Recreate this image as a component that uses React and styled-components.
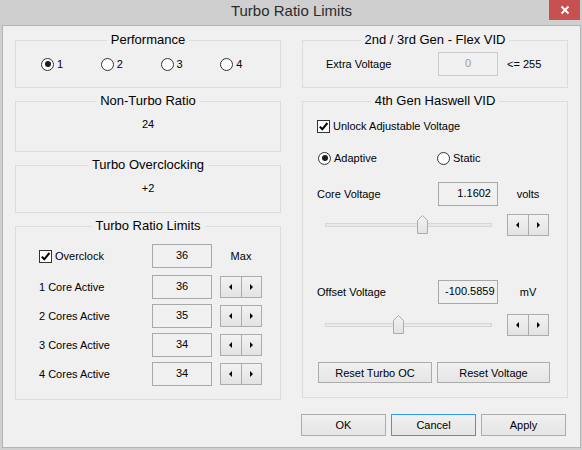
import React from "react";
import styled, { createGlobalStyle } from "styled-components";

const GlobalStyle = createGlobalStyle`
  html, body {
    margin: 0;
    padding: 0;
    background: #cfcfcf;
  }
  body {
    font-family: "Segoe UI", "Liberation Sans", Arial, sans-serif;
  }
  * {
    box-sizing: border-box;
  }
`;

const Window = styled.div`
  width: 582px;
  height: 450px;
  background: #cfcfcf;
  padding: 0 1px 2px 2px;
  display: flex;
  flex-direction: column;
  color: #000;
  font-size: 11px;
`;

const TitleBar = styled.div`
  height: 25px;
  display: grid;
  grid-template-columns: 1fr auto 1fr;
  align-items: start;
`;

const Title = styled.div`
  grid-column: 2;
  font-size: 15px;
  line-height: 22px;
  color: #2b2b2b;
`;

const CloseButton = styled.div`
  grid-column: 3;
  justify-self: end;
  width: 31px;
  height: 20px;
  margin-right: 1px;
  background: #c75050;
  display: flex;
  align-items: center;
  justify-content: center;
`;

const Client = styled.div`
  flex: 1;
  background: #f0f0f0;
  border: 1px solid #b4b4b4;
  padding: 14px 12px 0 12px;
  display: flex;
  flex-direction: column;
`;

const Columns = styled.div`
  display: grid;
  grid-template-columns: 266px 266px;
  column-gap: 21px;
  align-items: start;
`;

const Column = styled.div`
  display: flex;
  flex-direction: column;
  gap: 13px;
`;

const Group = styled.section`
  height: ${(p) => p.$h}px;
  border: 1px solid #dcdcdc;
  display: flex;
  flex-direction: column;
`;

const Legend = styled.div`
  align-self: center;
  margin-top: -9px;
  padding: 0 4px;
  background: #f0f0f0;
  font-size: 13px;
  line-height: 16px;
`;

const CenterValue = styled.div`
  margin-top: 7px;
  text-align: center;
  line-height: 16px;
`;

const RadioRow = styled.div`
  display: flex;
  margin-top: ${(p) => p.$mt}px;
  padding-left: ${(p) => p.$pl}px;
`;

const RadioItem = styled.label`
  width: ${(p) => p.$w}px;
  display: flex;
  align-items: center;
  gap: 3px;
  line-height: 16px;
`;

const RadioCircle = styled.span`
  width: 13px;
  height: 13px;
  border-radius: 50%;
  border: 1px solid #333;
  background: #fff;
  display: flex;
  align-items: center;
  justify-content: center;

  &::after {
    content: "";
    width: 6px;
    height: 6px;
    border-radius: 50%;
    background: ${(p) => (p.$on ? "#1c1c1c" : "transparent")};
  }
`;

const CheckLine = styled.label`
  display: flex;
  align-items: center;
  gap: 3px;
  line-height: 16px;
  margin-top: ${(p) => p.$mt || 0}px;
  padding-left: ${(p) => p.$pl || 0}px;
`;

const CheckBox = styled.span`
  width: 13px;
  height: 13px;
  border: 1px solid #333;
  background: #fff;
  display: flex;
  align-items: center;
  justify-content: center;
`;

const FieldRow = styled.div`
  display: grid;
  grid-template-columns: ${(p) => p.$cols};
  column-gap: ${(p) => p.$gap}px;
  align-items: center;
  margin-top: ${(p) => p.$mt}px;
  padding-left: ${(p) => p.$pl}px;
`;

const ValueBox = styled.div`
  height: 24px;
  border: 1px solid ${(p) => (p.$disabled ? "#cccccc" : "#a8a8a8")};
  color: ${(p) => (p.$disabled ? "#9a9a9a" : "#000")};
  text-align: ${(p) => p.$align || "center"};
  padding: 0 ${(p) => (p.$align === "right" ? 6 : 8)}px;
  line-height: 20px;
  white-space: nowrap;
`;

const Unit = styled.div`
  justify-self: ${(p) => p.$justify || "center"};
`;

const Spin = styled.div`
  display: flex;
  width: 42px;
  height: 22px;
`;

const SpinHalf = styled.div`
  flex: 1;
  border: 1px solid #acacac;
  background: linear-gradient(#f2f2f2, #e3e3e3);
  display: flex;
  align-items: center;
  justify-content: center;

  & + & {
    margin-left: -1px;
  }
`;

const Arrow = styled.span`
  width: 0;
  height: 0;
  border-top: 3px solid transparent;
  border-bottom: 3px solid transparent;
  ${(p) =>
    p.$dir === "left"
      ? "border-right: 3px solid #000;"
      : "border-left: 3px solid #000;"}
`;

const Track = styled.div`
  position: relative;
  margin-left: 8px;
  width: 167px;
  height: 4px;
  background: #e7eaea;
  border: 1px solid #d6d6d6;
`;

const Thumb = styled.svg`
  position: absolute;
  left: ${(p) => p.$pos}px;
  top: -9px;
`;

const ButtonRow = styled.div`
  display: flex;
  gap: 5px;
  margin-top: ${(p) => p.$mt}px;
  padding-left: ${(p) => p.$pl || 0}px;
  justify-content: ${(p) => p.$justify || "flex-start"};
  padding-right: ${(p) => p.$pr || 0}px;
`;

const Button = styled.div`
  width: ${(p) => p.$w}px;
  height: ${(p) => p.$h}px;
  border: 1px solid ${(p) => (p.$default ? "#3399ff" : "#acacac")};
  background: linear-gradient(#f0f0f0, #e5e5e5);
  display: flex;
  align-items: center;
  justify-content: center;
  font-size: 11px;
`;

const Radio = ({ on, w, children }) => (
  <RadioItem $w={w}>
    <RadioCircle $on={on} />
    {children}
  </RadioItem>
);

const Check = ({ mt, pl, children }) => (
  <CheckLine $mt={mt} $pl={pl}>
    <CheckBox>
      <svg width="11" height="11" viewBox="0 0 11 11">
        <path d="M1.8 5.6 L4.3 8.3 L9.4 2" fill="none" stroke="#000" strokeWidth="2" />
      </svg>
    </CheckBox>
    {children}
  </CheckLine>
);

const Spinner = () => (
  <Spin>
    <SpinHalf>
      <Arrow $dir="left" />
    </SpinHalf>
    <SpinHalf>
      <Arrow $dir="right" />
    </SpinHalf>
  </Spin>
);

const Slider = ({ pos }) => (
  <Track>
    <Thumb $pos={pos} width="11" height="19" viewBox="0 0 11 19">
      <defs>
        <linearGradient id="thumbFill" x1="0" y1="0" x2="0" y2="1">
          <stop offset="0" stopColor="#f3f3f3" />
          <stop offset="1" stopColor="#e2e2e2" />
        </linearGradient>
      </defs>
      <polygon
        points="0.5,5.5 5.5,0.5 10.5,5.5 10.5,18.5 0.5,18.5"
        fill="url(#thumbFill)"
        stroke="#acacac"
      />
    </Thumb>
  </Track>
);

const ratioRows = [
  { label: "1 Core Active", value: 36, mt: 7 },
  { label: "2 Cores Active", value: 35, mt: 5 },
  { label: "3 Cores Active", value: 34, mt: 5 },
  { label: "4 Cores Active", value: 34, mt: 5 },
];

const App = () => {
  return (
    <>
      <GlobalStyle />
      <Window>
        <TitleBar>
          <Title>Turbo Ratio Limits</Title>
          <CloseButton>
            <svg width="10" height="10" viewBox="0 0 10 10">
              <path d="M1.5 1.5 L8.5 8.5 M8.5 1.5 L1.5 8.5" stroke="#fff" strokeWidth="1.8" />
            </svg>
          </CloseButton>
        </TitleBar>
        <Client>
          <Columns>
            <Column>
              <Group $h={48}>
                <Legend>Performance</Legend>
                <RadioRow $mt={8} $pl={25}>
                  <Radio on w={60}>1</Radio>
                  <Radio w={60}>2</Radio>
                  <Radio w={60}>3</Radio>
                  <Radio w={60}>4</Radio>
                </RadioRow>
              </Group>

              <Group $h={51}>
                <Legend>Non-Turbo Ratio</Legend>
                <CenterValue>24</CenterValue>
              </Group>

              <Group $h={48}>
                <Legend>Turbo Overclocking</Legend>
                <CenterValue>+2</CenterValue>
              </Group>

              <Group $h={174}>
                <Legend>Turbo Ratio Limits</Legend>
                <FieldRow $cols="105px 60px 42px" $gap={8} $mt={10} $pl={23}>
                  <Check>Overclock</Check>
                  <ValueBox>36</ValueBox>
                  <Unit>Max</Unit>
                </FieldRow>
                {ratioRows.map((r) => (
                  <FieldRow key={r.label} $cols="105px 60px 42px" $gap={8} $mt={r.mt} $pl={23}>
                    <span>{r.label}</span>
                    <ValueBox>{r.value}</ValueBox>
                    <Spinner />
                  </FieldRow>
                ))}
              </Group>
            </Column>

            <Column>
              <Group $h={48}>
                <Legend>2nd / 3rd Gen - Flex VID</Legend>
                <FieldRow $cols="103px 60px auto" $gap={9} $mt={4} $pl={23}>
                  <span>Extra Voltage</span>
                  <ValueBox $disabled>0</ValueBox>
                  <Unit $justify="start">&lt;= 255</Unit>
                </FieldRow>
              </Group>

              <Group $h={297}>
                <Legend>4th Gen Haswell VID</Legend>
                <Check mt={9} pl={14}>Unlock Adjustable Voltage</Check>
                <RadioRow $mt={16} $pl={15}>
                  <Radio on w={119}>Adaptive</Radio>
                  <Radio w={100}>Static</Radio>
                </RadioRow>

                <FieldRow $cols="112px 60px 42px" $gap={9} $mt={16} $pl={14}>
                  <span>Core Voltage</span>
                  <ValueBox $align="right">1.1602</ValueBox>
                  <Unit>volts</Unit>
                </FieldRow>
                <FieldRow $cols="181px 42px" $gap={9} $mt={8} $pl={14}>
                  <Slider pos={91} />
                  <Spinner />
                </FieldRow>

                <FieldRow $cols="112px 60px 42px" $gap={9} $mt={44} $pl={14}>
                  <span>Offset Voltage</span>
                  <ValueBox $align="right">-100.5859</ValueBox>
                  <Unit>mV</Unit>
                </FieldRow>
                <FieldRow $cols="181px 42px" $gap={9} $mt={10} $pl={14}>
                  <Slider pos={67} />
                  <Spinner />
                </FieldRow>

                <ButtonRow $mt={26} $pl={15}>
                  <Button $w={114} $h={21}>Reset Turbo OC</Button>
                  <Button $w={113} $h={21}>Reset Voltage</Button>
                </ButtonRow>
              </Group>
            </Column>
          </Columns>

          <ButtonRow $mt={14} $justify="flex-end" $pr={2}>
            <Button $w={85} $h={22}>OK</Button>
            <Button $w={85} $h={22} $default>Cancel</Button>
            <Button $w={85} $h={22}>Apply</Button>
          </ButtonRow>
        </Client>
      </Window>
    </>
  );
};

export default App;
